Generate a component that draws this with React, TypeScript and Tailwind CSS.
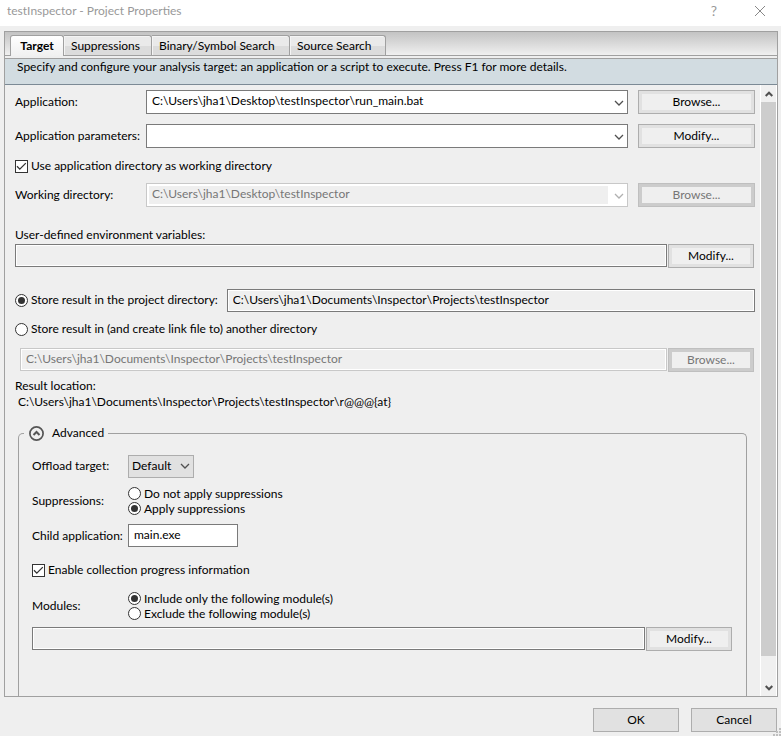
import { useState, type ReactNode } from 'react'

const TABS = [
  { name: 'Suppressions', width: 'w-[88px]' },
  { name: 'Binary/Symbol Search', width: 'w-[138px]' },
  { name: 'Source Search', width: 'w-[96px]' },
]

const PROJECT_DIR = 'C:\\Users\\jha1\\Documents\\Inspector\\Projects\\testInspector'

function Chevron({ up = false, className = '' }: { up?: boolean; className?: string }) {
  return (
    <svg viewBox="0 0 10 6" width="10" height="6" fill="none" stroke="currentColor" strokeWidth="1.3" className={className} aria-hidden="true">
      <path d={up ? 'M1 5 5 1l4 4' : 'M1 1l4 4 4-4'} />
    </svg>
  )
}

function Combo({ id, value, disabled = false }: { id: string; value: string; disabled?: boolean }) {
  return (
    <div className={`flex h-6 min-w-0 flex-1 items-stretch border bg-white p-0.5 ${disabled ? 'border-[#c8c8c8] text-[#b0b0b0]' : 'border-[#7a7a7a] text-[#505050]'}`}>
      <select
        id={id}
        disabled={disabled}
        className={`min-w-0 flex-1 appearance-none pb-0.5 pl-[3px] leading-4 opacity-100 outline-none ${disabled ? 'bg-[#efefef] text-[#767676]' : 'bg-white text-black'}`}
      >
        <option>{value}</option>
      </select>
      <Chevron className="mt-[7px] mr-px ml-1.5 shrink-0" />
    </div>
  )
}

function Field({ label, value = '', disabled = false }: { label: string; value?: string; disabled?: boolean }) {
  return (
    <input
      type="text"
      aria-label={label}
      defaultValue={value}
      readOnly
      disabled={disabled}
      className={`h-[23px] min-w-0 flex-1 border bg-[#efefef] px-[5px] pb-0.5 shadow-[inset_0_0_0_1px_#fff] outline-none ${disabled ? 'border-[#c8c8c8] text-[#767676]' : 'border-[#7a7a7a] text-black'}`}
    />
  )
}

function Button({ children, wide = false, disabled = false }: { children: ReactNode; wide?: boolean; disabled?: boolean }) {
  return (
    <button
      type="button"
      disabled={disabled}
      className={`h-6 shrink-0 border bg-[#efefef] ${wide ? 'w-[117px]' : 'w-[86px]'} ${
        disabled
          ? 'border-[#bfbfbf] text-[#767676] shadow-[inset_0_0_0_3px_#cccccc]'
          : 'border-[#adadad] text-black shadow-[inset_0_0_0_3px_#e1e1e1]'
      }`}
    >
      {children}
    </button>
  )
}

function Radio({ name, label, checked = false }: { name: string; label: string; checked?: boolean }) {
  return (
    <label className="flex items-center gap-[3px]">
      <input
        type="radio"
        name={name}
        defaultChecked={checked}
        className="grid size-[13px] shrink-0 appearance-none place-content-center rounded-full border border-[#333] bg-white before:size-[7px] before:rounded-full checked:before:bg-[#333]"
      />
      {label}
    </label>
  )
}

function Checkbox({ label }: { label: string }) {
  return (
    <label className="flex h-5 items-center gap-[3px]">
      <span className="grid size-[13px] shrink-0">
        <input type="checkbox" defaultChecked className="peer col-start-1 row-start-1 size-[13px] appearance-none border border-[#333] bg-white" />
        <svg viewBox="0 0 13 13" fill="none" stroke="#333" strokeWidth="1.3" className="pointer-events-none invisible col-start-1 row-start-1 size-[13px] peer-checked:visible" aria-hidden="true">
          <path d="M2 6.3 4.8 9.1l6-6" />
        </svg>
      </span>
      {label}
    </label>
  )
}

function Scrollbar() {
  return (
    <div className="flex w-[17px] shrink-0 flex-col border-x border-white bg-[#f0f0f0] text-[#505050]">
      <div className="flex h-[17px] items-center justify-center">
        <svg viewBox="0 0 8 6" width="8" height="6" fill="none" stroke="currentColor" strokeWidth="2" aria-hidden="true">
          <path d="M.7 5 4 1.7 7.3 5" />
        </svg>
      </div>
      <div className="flex-[24] bg-[#cdcdcd]" />
      <div className="flex-1" />
      <div className="flex h-[17px] items-center justify-center">
        <svg viewBox="0 0 8 6" width="8" height="6" fill="none" stroke="currentColor" strokeWidth="2" aria-hidden="true">
          <path d="M.7 1 4 4.3 7.3 1" />
        </svg>
      </div>
    </div>
  )
}

function Advanced() {
  const [open, setOpen] = useState(true)

  return (
    <fieldset className="mt-[13px] mr-2 ml-[3px] min-w-0 flex-1 rounded-t-[5px] border border-b-0 border-[#a0a0a0]">
      <legend className="ml-[5px] h-5 px-1">
        <button type="button" onClick={() => setOpen(!open)} className="flex h-5 items-center gap-2">
          <svg viewBox="0 0 16 16" width="16" height="16" fill="none" stroke="#555" aria-hidden="true">
            <circle cx="8.5" cy="8.5" r="6.6" strokeWidth="1.7" />
            <path d={open ? 'M5.5 10 8.5 7l3 3' : 'M5.5 7l3 3 3-3'} strokeWidth="2" />
          </svg>
          Advanced
        </button>
      </legend>
      {open && (
        <div className="flex flex-col pt-[11px] pr-[14px] pb-4 pl-[13px]">
          <div className="flex h-6 items-center">
            <label htmlFor="offload" className="w-24 shrink-0">Offload target:</label>
            <div className="grid w-[66px]">
              <select id="offload" className="col-start-1 row-start-1 h-[23px] appearance-none border border-[#adadad] bg-[#e1e1e1] pl-[3px] outline-none">
                <option>Default</option>
              </select>
              <Chevron className="pointer-events-none col-start-1 row-start-1 mr-1 self-center justify-self-end text-[#505050]" />
            </div>
          </div>
          <div className="mt-2 flex items-center">
            <span className="w-24 shrink-0">Suppressions:</span>
            <div className="leading-[15px]">
              <Radio name="suppress" label="Do not apply suppressions" />
              <Radio name="suppress" label="Apply suppressions" checked />
            </div>
          </div>
          <div className="mt-2 flex h-6 items-start">
            <label htmlFor="child" className="w-24 shrink-0 leading-6">Child application:</label>
            <input id="child" type="text" defaultValue="main.exe" className="h-[23px] w-[110px] border border-[#7a7a7a] bg-white px-[5px] pb-0.5 outline-none" />
          </div>
          <div className="mt-3">
            <Checkbox label="Enable collection progress information" />
          </div>
          <div className="mt-[11px] flex items-center">
            <span className="w-24 shrink-0">Modules:</span>
            <div className="leading-[15px]">
              <Radio name="modules" label="Include only the following module(s)" checked />
              <Radio name="modules" label="Exclude the following module(s)" />
            </div>
          </div>
          <div className="mt-1.5 flex gap-px">
            <Field label="Modules" />
            <Button>Modify...</Button>
          </div>
        </div>
      )}
    </fieldset>
  )
}

export default function App() {
  return (
    <div className="flex min-h-screen flex-col bg-[#efefef] font-['Lato',sans-serif] text-[12px] leading-4 text-black">
      <header className="flex h-[26px] shrink-0 items-center bg-white pr-[15px] pb-1 pl-[7px] text-[#999]">
        <h1 className="flex-1">testInspector - Project Properties</h1>
        <button type="button" aria-label="Help" className="mr-9 w-2 text-[14px]">?</button>
        <button type="button" aria-label="Close">
          <svg viewBox="0 0 12 12" width="12" height="12" stroke="#888" aria-hidden="true">
            <path d="M1 1l10 10M11 1 1 11" />
          </svg>
        </button>
      </header>

      <main className="mt-[5px] mr-[3px] ml-1 flex flex-1 flex-col border border-[#a0a0a0]">
        <div className="flex h-6 shrink-0 items-end border-b border-[#a0a0a0] bg-linear-to-b from-[#c3c3c3] to-[#f0f0f0] pl-[5px]" role="tablist">
          <button type="button" role="tab" aria-selected="true" className="-mb-px h-[21px] w-[54px] rounded-t-[3px] border-x border-t border-[#a0a0a0] bg-linear-to-b from-white to-[#f0f0f0] font-bold">
            Target
          </button>
          {TABS.map(tab => (
            <button
              key={tab.name}
              type="button"
              role="tab"
              aria-selected="false"
              className={`h-5 rounded-tr-[3px] border-t border-r border-[#a0a0a0] bg-linear-to-b from-[#eaeaea] from-50% to-[#dcdcdc] to-50% pr-2 pl-[7px] text-left whitespace-nowrap shadow-[inset_1px_1px_0_#f4f4f4] ${tab.width}`}
            >
              {tab.name}
            </button>
          ))}
        </div>
        <p className="mt-0.5 h-[27px] shrink-0 border-t border-b border-t-[#a0a0a0] border-b-[#7c8a95] bg-[#d2dce1] pl-3">
          Specify and configure your analysis target: an application or a script to execute. Press F1 for more details.
        </p>

        <div className="flex flex-1">
          <form className="flex min-w-0 flex-1 flex-col pt-[5px] pr-[5px] pl-2.5">
            <div className="flex items-center">
              <label htmlFor="app" className="w-[131px] shrink-0 whitespace-nowrap">Application:</label>
              <Combo id="app" value={'C:\\Users\\jha1\\Desktop\\testInspector\\run_main.bat'} />
              <div className="ml-2.5 flex"><Button wide>Browse...</Button></div>
            </div>
            <div className="mt-2.5 flex items-center">
              <label htmlFor="params" className="w-[131px] shrink-0 whitespace-nowrap">Application parameters:</label>
              <Combo id="params" value="" />
              <div className="ml-2.5 flex"><Button wide>Modify...</Button></div>
            </div>
            <div className="mt-2">
              <Checkbox label="Use application directory as working directory" />
            </div>
            <div className="mt-[7px] flex items-center">
              <label htmlFor="workdir" className="w-[131px] shrink-0 whitespace-nowrap">Working directory:</label>
              <Combo id="workdir" value={'C:\\Users\\jha1\\Desktop\\testInspector'} disabled />
              <div className="ml-2.5 flex"><Button wide disabled>Browse...</Button></div>
            </div>

            <p className="mt-5">User-defined environment variables:</p>
            <div className="mt-px mr-px flex gap-px">
              <Field label="User-defined environment variables" />
              <Button>Modify...</Button>
            </div>

            <div className="mt-5 flex h-6 items-center gap-[9px]">
              <Radio name="store" label="Store result in the project directory:" checked />
              <Field label="Project directory" value={PROJECT_DIR} />
            </div>
            <div className="mt-[9px]">
              <Radio name="store" label="Store result in (and create link file to) another directory" />
            </div>
            <div className="mt-[11px] mr-px ml-[5px] flex gap-px">
              <Field label="Another directory" value={PROJECT_DIR} disabled />
              <Button disabled>Browse...</Button>
            </div>

            <p className="mt-1.5">Result location:</p>
            <p className="pl-[3px]">{PROJECT_DIR}\r@@@{'{at}'}</p>

            <Advanced />
          </form>
          <Scrollbar />
        </div>
      </main>

      <footer className="flex shrink-0 items-end justify-end pt-[11px]">
        <div className="flex gap-3 pb-1">
          <button type="button" className="h-6 w-[86px] border border-[#adadad] bg-[#e1e1e1]">OK</button>
          <button type="button" className="-mr-1 h-6 w-[86px] border border-[#adadad] bg-[#e1e1e1]">Cancel</button>
        </div>
        <svg viewBox="0 0 8 8" width="8" height="8" fill="#bfbfbf" aria-hidden="true">
          <path d="M6 0h2v2H6zM3 3h2v2H3zM6 3h2v2H6zM0 6h2v2H0zM3 6h2v2H3zM6 6h2v2H6z" />
        </svg>
      </footer>
    </div>
  )
}
